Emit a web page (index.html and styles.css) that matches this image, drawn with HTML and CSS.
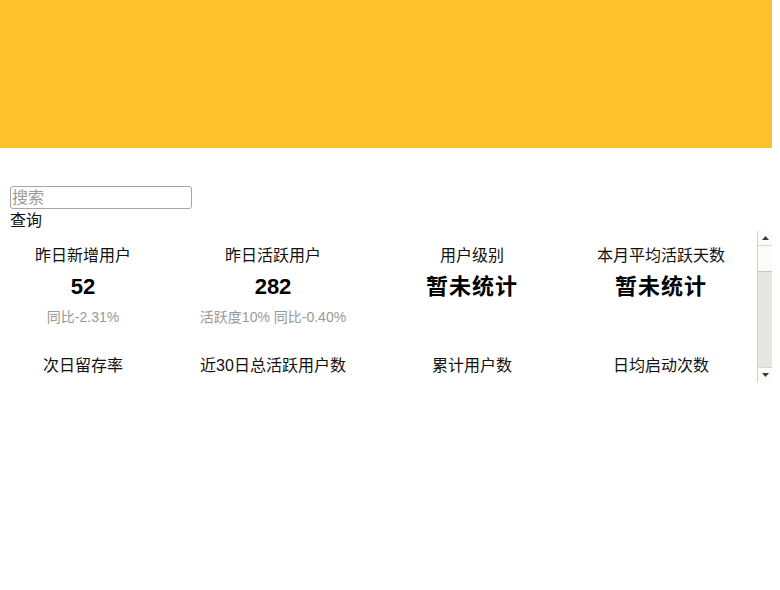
FILE: index.html
```html
<!DOCTYPE html>
<html lang="zh-CN">
<head>
<meta charset="utf-8">
<title>用户统计</title>
<link rel="stylesheet" href="styles.css">
</head>
<body>
<div class="header"></div>
<div class="search">
  <input class="search-input" type="text" placeholder="搜索">
  <div class="search-btn">查询</div>
</div>
<div class="stats">
  <div class="viewport">
    <div class="grid">
      <div class="cell"><div class="label">昨日新增用户</div><div class="value">52</div><div class="sub">同比-2.31%</div></div>
      <div class="cell"><div class="label">昨日活跃用户</div><div class="value">282</div><div class="sub">活跃度10% 同比-0.40%</div></div>
      <div class="cell"><div class="label">用户级别</div><div class="value cn">暂未统计</div><div class="sub"></div></div>
      <div class="cell"><div class="label">本月平均活跃天数</div><div class="value cn">暂未统计</div><div class="sub"></div></div>

      <div class="cell"><div class="label">次日留存率</div></div>
      <div class="cell"><div class="label">近30日总活跃用户数</div></div>
      <div class="cell"><div class="label">累计用户数</div></div>
      <div class="cell"><div class="label">日均启动次数</div></div>
    </div>
  </div>
  <div class="scrollbar">
    <div class="sb-btn">
      <svg width="7" height="4" viewBox="0 0 7 4"><polygon points="0,4 7,4 3.5,0" fill="#3a3a3a"/></svg>
    </div>
    <div class="sb-thumb"></div>
    <div class="sb-track"></div>
    <div class="sb-btn sb-down">
      <svg width="7" height="4" viewBox="0 0 7 4"><polygon points="0,0 7,0 3.5,4" fill="#3a3a3a"/></svg>
    </div>
  </div>
</div>
</body>
</html>
```

FILE: styles.css
```css
html, body {
  margin: 0;
  padding: 0;
  background: #ffffff;
}

body {
  font-family: "Liberation Sans", "Noto Sans CJK SC", sans-serif;
  color: #111111;
  font-size: 16px;
}

.header {
  width: 772px;
  height: 148px;
  background: #ffc22d;
}

.search {
  padding: 38px 0 0 10px;
}

.search-input {
  display: block;
  box-sizing: border-box;
  width: 182px;
  height: 23px;
  margin: 0;
  padding: 0 1px;
  border: 1px solid #a6a6a6;
  border-radius: 3px;
  font-family: "Liberation Sans", "Noto Sans CJK SC", sans-serif;
  font-size: 16px;
  color: #111;
  outline: none;
}

.search-input::placeholder {
  color: #9a9a9a;
}

.search-btn {
  height: 22px;
  line-height: 24px;
  font-size: 16px;
  color: #111;
}

.stats {
  display: flex;
  width: 772px;
  height: 151px;
}

.viewport {
  width: 758px;
  overflow: hidden;
}

.scrollbar {
  display: flex;
  flex-direction: column;
  width: 14px;
  background: #e6e6e2;
  border-left: 1px solid #cfcfcb;
}

.sb-btn {
  display: flex;
  align-items: center;
  justify-content: center;
  height: 15px;
  background: #fbfbfa;
  border-bottom: 1px solid #d6d6d2;
  box-sizing: border-box;
}

.sb-btn svg {
  display: block;
}

.sb-down {
  border-bottom: none;
  border-top: 1px solid #d6d6d2;
}

.sb-thumb {
  height: 26px;
  background: #fbfbfa;
  border-bottom: 1px solid #c8c8c4;
  box-sizing: border-box;
}

.sb-track {
  flex: 1;
}

.grid {
  display: grid;
  grid-template-columns: 166px 214px 184px 194px;
  padding-bottom: 560px;
  text-align: center;
}

.cell {
  padding: 13px 0 14px;
}

.label {
  height: 24px;
  line-height: 24px;
  font-size: 16px;
  color: #111;
}

.value {
  height: 30px;
  line-height: 30px;
  margin-top: 4px;
  font-size: 22px;
  font-weight: bold;
  color: #000;
}

.value.cn {
  letter-spacing: 1px;
}

.sub {
  height: 20px;
  line-height: 20px;
  margin-top: 5px;
  font-size: 14px;
  color: #999999;
}
```
